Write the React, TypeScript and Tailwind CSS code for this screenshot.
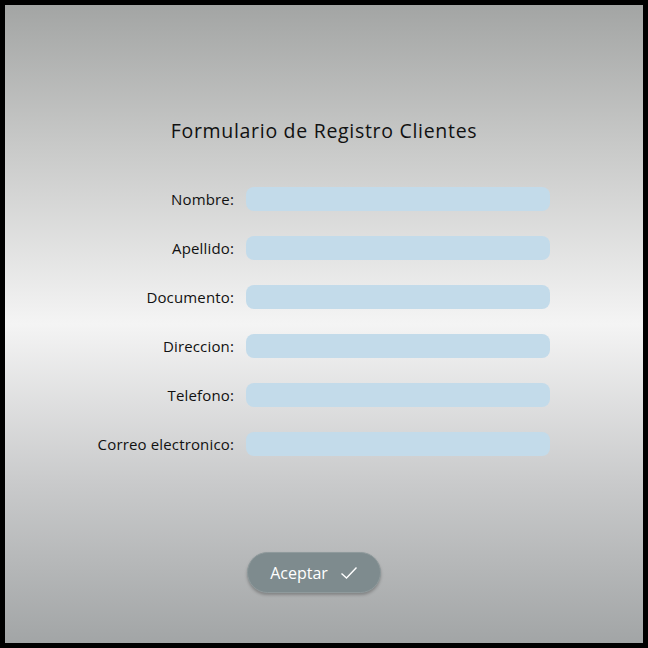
import React from 'react';

const fields = ['Nombre', 'Apellido', 'Documento', 'Direccion', 'Telefono', 'Correo electronico'];

const App: React.FC = () => {
  return (
    <div className="w-[648px] h-[648px] bg-black p-[5px]">
      <div
        className="w-full h-full flex flex-col bg-[linear-gradient(180deg,#a3a5a4_0%,#c8c9c8_22%,#f4f4f4_50%,#c9cacb_75%,#a2a5a6_100%)] text-[#111]"
        style={{ fontFamily: '"Open Sans", "Noto Sans", sans-serif' }}
      >
        <h1 className="mt-[112px] self-center text-[19.5px] tracking-[0.7px] leading-[28px]">
          Formulario de Registro Clientes
        </h1>

        <form className="mt-[42px] ml-[12px] flex flex-col gap-[25px]">
          {fields.map((f) => (
            <div key={f} className="flex items-center">
              <label className="w-[229px] pr-[12px] text-right text-[15px] leading-[24px] tracking-[0.15px]">{f}:</label>
              <input
                type="text"
                className="w-[304px] h-[24px] rounded-[8px] bg-[#c3dbea] outline-none"
              />
            </div>
          ))}
        </form>

        <button
          type="button"
          className="mt-[96px] ml-[242px] w-[134px] h-[41px] rounded-full bg-[#7e8b8e] text-white text-[16px] flex items-center justify-center gap-[12px] shadow-[0_2px_3px_rgba(0,0,0,0.25)] border border-[#8f9a9c]"
        >
          Aceptar
          <svg width="18" height="14" viewBox="0 0 18 14" fill="none" stroke="white" strokeWidth="1.4">
            <path d="M1.5 7.5 L6.5 12 L16.5 1.5" />
          </svg>
        </button>
      </div>
    </div>
  );
};

export default App;
